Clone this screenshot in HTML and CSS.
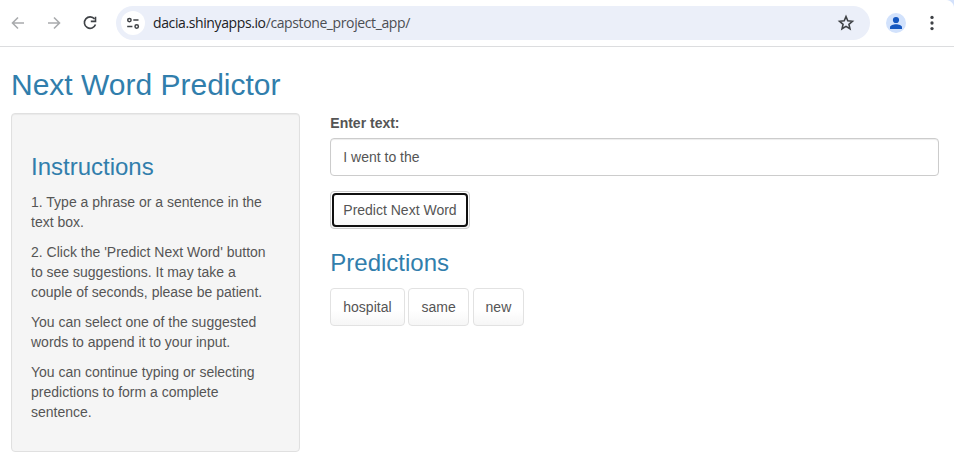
FILE: index.html
```html
<!DOCTYPE html>
<html lang="en">
<head>
<meta charset="utf-8">
<title>Next Word Predictor</title>
<link rel="stylesheet" href="styles.css">
</head>
<body>
<header class="toolbar">
  <svg class="icon back" viewBox="0 0 16 16"><path d="M14 8H3M8 2.5 2.5 8 8 13.5"/></svg>
  <svg class="icon forward" viewBox="0 0 16 16"><path d="M2 8h11M8 2.5 13.5 8 8 13.5"/></svg>
  <svg class="icon reload" viewBox="0 0 16 16"><path d="M12.6 4.1A5.7 5.7 0 1 0 13.5 9.5"/><path d="M13.5 1.7v4.7H8.8"/></svg>
  <div class="address">
    <span class="site"><svg viewBox="0 0 14 14"><circle cx="3.4" cy="4.1" r="1.7"/><path d="M7.3 4.1h5.2M1.2 10.5h5.2"/><circle cx="10.7" cy="10.5" r="1.7"/></svg></span>
    <span class="url">dacia.shinyapps.io<span class="path">/capstone_project_app/</span></span>
    <svg class="star" viewBox="0 0 16 16"><path d="m8 2.3 1.6 3.8 4.1.35-3.1 2.7.93 4L8 11l-3.53 2.15.93-4-3.1-2.7 4.1-.35z"/></svg>
  </div>
  <svg class="profile" viewBox="0 0 20 20"><circle class="disc" cx="10" cy="10" r="10"/><circle cx="10" cy="7" r="3.1"/><path d="M4 16v-1.7c0-2.2 3.5-3.1 6-3.1s6 .9 6 3.1V16z"/></svg>
  <svg class="menu" viewBox="0 0 4 16"><circle cx="2" cy="2.4" r="1.65"/><circle cx="2" cy="8" r="1.65"/><circle cx="2" cy="13.6" r="1.65"/></svg>
</header>
<div class="page">
  <h2>Next Word Predictor</h2>
  <div class="row">
    <aside class="well">
      <h3>Instructions</h3>
      <p>1. Type a phrase or a sentence in the text box.</p>
      <p>2. Click the 'Predict Next Word' button to see suggestions. It may take a couple of seconds, please be patient.</p>
      <p>You can select one of the suggested words to append it to your input.</p>
      <p>You can continue typing or selecting predictions to form a complete sentence.</p>
    </aside>
    <main>
      <label for="phrase">Enter text:</label>
      <input id="phrase" type="text" value="I went to the">
      <button class="btn focused" type="button">Predict Next Word</button>
      <h3>Predictions</h3>
      <div class="words">
        <button class="btn" type="button">hospital</button>
        <button class="btn" type="button">same</button>
        <button class="btn" type="button">new</button>
      </div>
    </main>
  </div>
</div>
</body>
</html>
```
FILE: styles.css
```css
* { box-sizing: border-box; }
body {
  margin: 0;
  height: 466px;
  overflow: hidden;
  background: #fff;
  color: #555;
  font: 14px/20px "Liberation Sans", Arial, sans-serif;
}
.toolbar {
  display: flex;
  align-items: center;
  height: 47px;
  padding: 0 20px 0 10px;
  border-bottom: 1px solid #dcdddf;
  background: radial-gradient(circle at 0 100%, #fff 7.5px, #d3e1fb 8.5px) top right / 8px 8px no-repeat #fff;
}
.icon { width: 16px; height: 16px; fill: none; stroke: #a9abad; stroke-width: 1.6; }
.forward { margin-left: 20px; }
.reload { margin-left: 20px; stroke: #3f4246; }
.address {
  display: flex;
  align-items: center;
  width: 754px;
  height: 34px;
  margin-left: 18px;
  padding: 0 15px 0 5px;
  border-radius: 17px;
  background: #ebeff9;
}
.site {
  display: flex;
  align-items: center;
  justify-content: center;
  width: 24px;
  height: 24px;
  border-radius: 50%;
  background: #fff;
}
.site svg { width: 14px; height: 14px; fill: none; stroke: #3f4246; stroke-width: 1.5; }
.url {
  margin-left: 8px;
  color: #202124;
  font: 14px/20px "Open Sans", "Noto Sans", sans-serif;
  letter-spacing: -0.39px;
}
.path { color: #4b4e53; }
.star { width: 18px; height: 18px; margin-left: auto; fill: none; stroke: #3f4246; stroke-width: 1.4; }
.profile { width: 20px; height: 20px; margin-left: 16px; fill: #1557c0; }
.disc { fill: #d2e2fc; }
.menu { width: 4px; height: 16px; margin-left: 24px; fill: #3f4246; }

.page { padding: 20px 15px 0 11px; }
h2, h3 { margin: 0; color: #317eac; font-weight: 500; }
h2 { font-size: 30px; line-height: 36px; }
h3 { font-size: 24px; line-height: 26px; }
.row { display: flex; gap: 30px; margin-top: 10px; }
.well {
  width: 289px;
  height: 339px;
  padding: 40px 19px 19px;
  border: 1px solid #e0e0e0;
  border-radius: 4px;
  background: #f5f5f5;
  box-shadow: inset 0 1px 1px rgba(0, 0, 0, .05);
}
.well h3 { margin-bottom: 12px; }
p { margin: 0 0 10px; }
main { flex: 1; padding-left: .3px; }
label { display: block; margin-bottom: 5px; font-weight: 700; }
input {
  display: block;
  width: 100%;
  height: 38px;
  margin-bottom: 15px;
  padding: 8px 12px;
  border: 1px solid #ccc;
  border-radius: 4px;
  background: #fff;
  color: #555;
  font: inherit;
  box-shadow: inset 0 1px 1px rgba(0, 0, 0, .075);
}
.btn {
  height: 38px;
  padding: 8px 12px;
  border: 1px solid #e2e2e2;
  border-radius: 4px;
  background: linear-gradient(#fff, #fff 60%, #f6f6f6);
  color: #555;
  font: inherit;
  white-space: nowrap;
}
.focused {
  display: block;
  border-color: #ccc;
  position: relative;
}
.focused::after {
  content: "";
  position: absolute;
  inset: 1px;
  border: 2px solid #101010;
  border-radius: 4px;
}
main h3 { margin: 21px 0 12px; }
.words { display: flex; gap: 3.9px; }
```
